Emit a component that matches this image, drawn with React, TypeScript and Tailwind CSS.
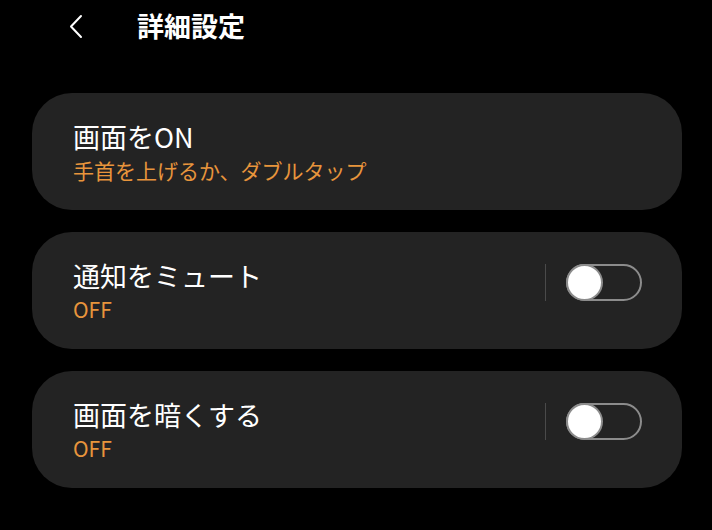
const font = { fontFamily: '"Noto Sans CJK JP", "Noto Sans", sans-serif' };

type Row = { title: string; sub: string; toggle?: boolean };

const rows: Row[] = [
    { title: '画面をON', sub: '手首を上げるか、ダブルタップ' },
    { title: '通知をミュート', sub: 'OFF', toggle: true },
    { title: '画面を暗くする', sub: 'OFF', toggle: true },
];

const Toggle = () => (
    <div className="flex items-center mb-[16px]">
        <div className="w-px h-[37px] bg-[#4a4a4a] mr-[20px]" />
        <div className="relative w-[76px] h-[37px] rounded-full border-2 border-[#8c8c8c]">
            <div className="absolute -left-[2px] -top-[2px] w-[37px] h-[37px] rounded-full bg-white border-2 border-[#8c8c8c]" />
        </div>
    </div>
);

const App = () => {
    return (
        <div className="w-[712px] h-[530px] bg-black text-white overflow-hidden" style={font}>
            <header className="flex items-center h-[52px] pl-[68px]">
                <svg width="16" height="26" viewBox="0 0 16 26" fill="none" stroke="white" strokeWidth="2" strokeLinecap="round" strokeLinejoin="round">
                    <polyline points="13,3 3,13.5 13,24" />
                </svg>
                <h1 className="ml-[53px] text-[27px] font-bold">詳細設定</h1>
            </header>
            <div className="flex flex-col gap-[22px] ml-[32px] mt-[41px] w-[650px]">
                {rows.map((r) => (
                    <div key={r.title} className="flex items-center justify-between h-[117px] rounded-[40px] bg-[#232323] pl-[41px] pr-[40px]">
                        <div className="flex flex-col">
                            <span className="text-[27px] leading-[34px]">{r.title}</span>
                            <span className="text-[21px] leading-[28px] mt-[2px] text-[#e8953c]">{r.sub}</span>
                        </div>
                        {r.toggle && <Toggle />}
                    </div>
                ))}
            </div>
        </div>
    );
};

export default App;
